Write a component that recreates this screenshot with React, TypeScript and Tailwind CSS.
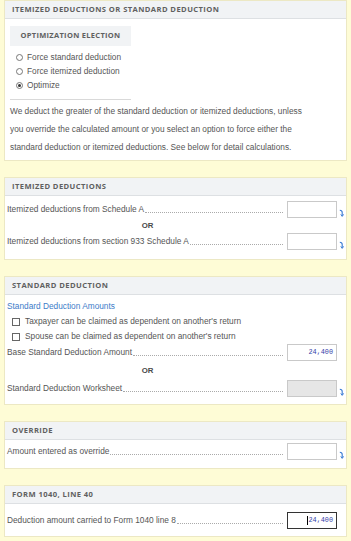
import React from "react";

const sans = "font-['Liberation_Sans',Arial,sans-serif]";
const head = "font-['Open_Sans',sans-serif]";

const Arrow = () => (
    <svg width="5" height="8" viewBox="0 0 5 8" className="block">
        <path d="M0.8 1.2 C2.6 1.2 3.2 2 3.2 3.5 L3.2 6.8" stroke="#3a7bd5" strokeWidth="1.1" fill="none" />
        <path d="M1.8 5.4 L3.2 7.4 L4.6 5.4" stroke="#3a7bd5" strokeWidth="1" fill="none" />
    </svg>
);

const PanelHeader = ({ title }: { title: string }) => (
    <div className={`flex h-[18px] items-center border-b border-[#dde0e3] bg-[#f1f3f5] px-[7px] ${head} text-[7.6px] font-bold tracking-[0.42px] text-[#606060]`}>
        {title}
    </div>
);

const Panel = ({ title, children, className }: { title: string, children: React.ReactNode, className?: string }) => (
    <div className="border border-[#ece8c4] bg-white">
        <PanelHeader title={title} />
        <div className={className}>{children}</div>
    </div>
);

type RowProps = {
    label: string,
    value?: string,
    disabled?: boolean,
    focused?: boolean,
    arrow?: boolean
};

const AmountRow = ({ label, value, disabled, focused, arrow = true }: RowProps) => (
    <div className="flex h-[17px] items-center pl-[2px]">
        <span className={`${sans} whitespace-nowrap text-[8.3px] text-[#555]`}>{label}</span>
        <span className="mx-[1px] mt-[5px] flex-1 border-b border-dotted border-[#aaa]" />
        <div
            className={`ml-[3px] flex h-[17px] w-[50px] items-center justify-end px-[3px] font-['Liberation_Mono',monospace] text-[6.8px] text-[#3340a8] ${
                focused ? "border border-[#333]" : disabled ? "border border-[#c9c9c9] bg-[#e6e6e6]" : "border border-[#c9c9c9] bg-white"
            }`}>
            {focused && <span className="mr-[1px] h-[9px] w-px bg-black" />}
            {value}
        </div>
        <div className="flex h-[17px] w-[9px] items-end justify-center pb-[1px]">{arrow && <Arrow />}</div>
    </div>
);

const Or = ({ h }: { h: string }) => (
    <div className={`flex ${h} items-center pr-[56px] ${sans} justify-center text-[7.8px] font-bold text-[#4a4a4a]`}>OR</div>
);

const Radio = ({ label, checked }: { label: string, checked?: boolean }) => (
    <div className={`flex h-[14px] items-center gap-[4px] pl-[6px] ${sans} text-[8.3px] text-[#555]`}>
        <span className="flex h-[7px] w-[7px] items-center justify-center rounded-full border border-[#777] bg-white">
            {checked && <span className="h-[3px] w-[3px] rounded-full bg-[#333]" />}
        </span>
        {label}
    </div>
);

const Check = ({ label }: { label: string }) => (
    <div className={`flex h-[15px] items-center gap-[5px] pl-[7px] ${sans} text-[8.3px] text-[#555]`}>
        <span className="h-[8px] w-[8px] border border-[#666] bg-white" />
        {label}
    </div>
);

export default function App() {
    return (
        <div className="flex min-h-[541px] w-[351px] flex-col gap-4 bg-[#fefcd6] pl-[4px] pr-[4px] pb-[4px]">
            <Panel title="ITEMIZED DEDUCTIONS OR STANDARD DEDUCTION" className="px-[5px] pt-[7px] pb-[4px]">
                <div className="w-[121px] border-b border-[#d9d9d9] pb-[7px]">
                    <div className={`flex h-[20px] items-center justify-center bg-[#f1f3f5] ${head} text-[7.5px] font-bold tracking-[0.3px] text-[#606060]`}>
                        OPTIMIZATION ELECTION
                    </div>
                    <div className="pt-[4px]">
                        <Radio label="Force standard deduction" />
                        <Radio label="Force itemized deduction" />
                        <Radio label="Optimize" checked />
                    </div>
                </div>
                <p className={`pt-[2px] ${sans} text-[8.3px] leading-[18px] text-[#555]`}>
                    We deduct the greater of the standard deduction or itemized deductions, unless
                    <br />
                    you override the calculated amount or you select an option to force either the
                    <br />
                    standard deduction or itemized deductions. See below for detail calculations.
                </p>
            </Panel>

            <Panel title="ITEMIZED DEDUCTIONS" className="pt-[5px] pb-[9px]">
                <AmountRow label="Itemized deductions from Schedule A" />
                <Or h="h-[15px]" />
                <AmountRow label="Itemized deductions from section 933 Schedule A" />
            </Panel>

            <Panel title="STANDARD DEDUCTION" className="pt-[4px] pb-[7px]">
                <div className={`flex h-[15px] items-center pl-[2px] ${sans} text-[8.3px] text-[#3d7cc9]`}>Standard Deduction Amounts</div>
                <Check label="Taxpayer can be claimed as dependent on another's return" />
                <Check label="Spouse can be claimed as dependent on another's return" />
                <AmountRow label="Base Standard Deduction Amount" value="24,400" arrow={false} />
                <Or h="h-[19px]" />
                <AmountRow label="Standard Deduction Worksheet" disabled />
            </Panel>

            <Panel title="OVERRIDE" className="pt-[3px] pb-[8px]">
                <AmountRow label="Amount entered as override" />
            </Panel>

            <Panel title="FORM 1040, LINE 40" className="pt-[8px] pb-[7px]">
                <AmountRow label="Deduction amount carried to Form 1040 line 8" value="24,400" focused arrow={false} />
            </Panel>
        </div>
    );
}
